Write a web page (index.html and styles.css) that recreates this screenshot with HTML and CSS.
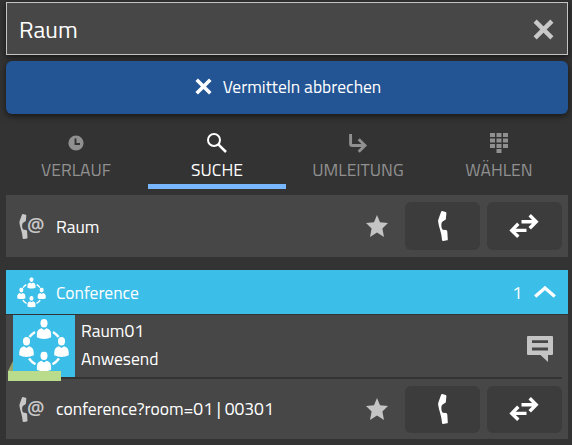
FILE: index.html
```html
<!DOCTYPE html>
<html lang="de">
<head>
    <meta charset="UTF-8">
    <meta name="viewport" content="width=device-width, initial-scale=1.0">
    <title>Suche</title>
    <link rel="stylesheet" href="styles.css">
</head>
<body>

    <!-- Shared icons -->
    <svg class="icon-defs" width="0" height="0">
        <symbol id="phone" viewBox="0 0 10 30">
            <path d="M3.2 0.6 Q3.5 0 4.2 .1 L7.6 .9 Q8.5 1.2 8.4 2 L7.8 8.4 L4.6 10.4 Q3.3 11.2 3.3 14 Q3.3 17.4 4.7 18.7 L8 19.1 Q9.2 19.4 9.3 20.4 L9.8 28.4 Q9.8 29.2 9 29.3 L5.2 29.9 Q4.2 30 4 29 Q3.7 24 2 18.5 Q.7 14.5 .1 10.5 Q0 9.3 .8 7.2 Z"/>
        </symbol>
        <symbol id="cross" viewBox="0 0 20 20">
            <path d="M2 2 L18 18 M18 2 L2 18" fill="none" stroke="currentColor" stroke-width="4.2"/>
        </symbol>
        <symbol id="star" viewBox="0 0 22 22">
            <path d="M11 0 L14 7.3 L22 8 L16.4 13.6 L18 22 L11 17.6 L4 22 L5.6 13.6 L0 8 L8 7.3 Z"/>
        </symbol>
        <symbol id="transfer" viewBox="0 0 30 24">
            <path d="M12.5 7.7 H27 M20.7 1.3 L27.2 7.7 L20.7 14.3 M17.5 16.4 H3 M9.3 9.8 L2.8 16.4 L9.3 22.8" fill="none" stroke="currentColor" stroke-width="3.4"/>
        </symbol>
        <symbol id="person" viewBox="0 0 15 20">
            <ellipse cx="7.5" cy="4.2" rx="3.5" ry="4.2"/>
            <path d="M.3 18.2 Q0 12.8 1.8 11 Q3 10 4.9 9.3 L7.5 11 L10.1 9.3 Q12 10 13.2 11 Q15 12.8 14.7 18.2 Q11.5 19.9 7.5 19.9 Q3.5 19.9 .3 18.2 Z"/>
        </symbol>
        <symbol id="conference" viewBox="0 0 50 53">
            <use href="#person" x="17.5" y="0" width="15" height="20"/>
            <use href="#person" x="0" y="18" width="15" height="20"/>
            <use href="#person" x="35" y="18" width="15" height="20"/>
            <use href="#person" x="17.5" y="32.5" width="15" height="20"/>
            <path d="M10.5 18 Q12.5 15.3 16 13 M34 13 Q37.5 15.3 39.5 18 M10 39.5 Q12.5 43 16.5 45.3 M40 39.5 Q37.5 43 33.5 45.3" fill="none" stroke="currentColor" stroke-width="2.4"/>
        </symbol>
    </svg>

    <div class="search-box">
        <span class="search-text">Raum</span>
        <svg class="icon clear-icon"><use href="#cross"/></svg>
    </div>

    <div class="cancel-btn">
        <svg class="icon cancel-icon"><use href="#cross"/></svg>
        <span>Vermitteln abbrechen</span>
    </div>

    <!-- Tabs -->
    <div class="tabs">
        <div class="tab">
            <svg class="icon tab-icon" viewBox="0 0 20 20">
                <circle cx="10" cy="10" r="7.6"/>
                <path d="M9.5 5.5 V11 H14" fill="none" stroke="#333" stroke-width="1.9"/>
            </svg>
            <span>VERLAUF</span>
        </div>
        <div class="tab active">
            <svg class="icon tab-icon" viewBox="0 0 20 20">
                <circle cx="7" cy="7" r="6" fill="none" stroke="currentColor" stroke-width="2"/>
                <path d="M11.3 11.3 L19 19" stroke="currentColor" stroke-width="2.5"/>
            </svg>
            <span>SUCHE</span>
        </div>
        <div class="tab">
            <svg class="icon tab-icon" viewBox="0 0 20 20">
                <path d="M2.6 1 V11 Q2.6 12.5 4.1 12.5 H16.5 M10.7 6.3 L17 12.5 L10.7 18.8" fill="none" stroke="currentColor" stroke-width="2.9"/>
            </svg>
            <span>UMLEITUNG</span>
        </div>
        <div class="tab">
            <svg class="icon tab-icon" viewBox="0 0 20 20">
                <path d="M1 0h5v4h-5z M7.5 0h5v4h-5z M14 0h5v4h-5z M1 5.5h5v4h-5z M7.5 5.5h5v4h-5z M14 5.5h5v4h-5z M1 11h5v4h-5z M7.5 11h5v4h-5z M14 11h5v4h-5z M7.5 16h5v4h-5z"/>
            </svg>
            <span>WÄHLEN</span>
        </div>
    </div>

    <!-- Dial the typed text -->
    <div class="row">
        <div class="phone-at"><svg class="icon"><use href="#phone"/></svg><span>@</span></div>
        <span class="row-text">Raum</span>
        <svg class="icon star"><use href="#star"/></svg>
        <div class="action"><svg class="icon call-icon"><use href="#phone"/></svg></div>
        <div class="action"><svg class="icon transfer-icon"><use href="#transfer"/></svg></div>
    </div>

    <!-- Result group -->
    <div class="group-header">
        <svg class="icon group-icon"><use href="#conference"/></svg>
        <span class="group-name">Conference</span>
        <span class="group-count">1</span>
        <svg class="icon chevron" viewBox="0 0 22 12">
            <path d="M1.2 10.6 L11 2 L20.8 10.6" fill="none" stroke="currentColor" stroke-width="3.3"/>
        </svg>
    </div>

    <div class="contact">
        <div class="avatar">
            <svg class="icon avatar-icon"><use href="#conference"/></svg>
            <svg class="presence" viewBox="0 0 53 20">
                <path d="M0 10 L5 0 V10 Z" fill="#95a66f"/>
                <path d="M0 10 H53 V20 H0 Z" fill="#b9db8c"/>
            </svg>
        </div>
        <div class="contact-info">
            <div class="contact-name">Raum01</div>
            <div class="contact-state">Anwesend</div>
        </div>
        <svg class="icon chat" viewBox="0 0 26 26">
            <path fill-rule="evenodd" d="M1 0 H25 Q26 0 26 1 V18 Q26 19 25 19 H21 V26 L13.5 19 H1 Q0 19 0 18 V1 Q0 0 1 0 Z M5 4.3 V7 H21 V4.3 Z M5 11.5 V14.5 H21 V11.5 Z"/>
        </svg>
    </div>

    <div class="row row-last">
        <div class="phone-at"><svg class="icon"><use href="#phone"/></svg><span>@</span></div>
        <span class="row-text">conference?room=01 | 00301</span>
        <svg class="icon star"><use href="#star"/></svg>
        <div class="action"><svg class="icon call-icon"><use href="#phone"/></svg></div>
        <div class="action"><svg class="icon transfer-icon"><use href="#transfer"/></svg></div>
    </div>

</body>
</html>
```

FILE: styles.css
```css
* {
    box-sizing: border-box;
}
body {
    font-family: "Titillium Web", Roboto, sans-serif;
    font-size: 17.5px;
    background-color: #333;
    color: #fff;
    margin: 0;
    padding: 2px 4px 0 6px;
    height: 445px;
    overflow: hidden;
}
.icon-defs {
    position: absolute;
}
.icon {
    display: block;
    fill: currentColor;
    flex: none;
}
.search-box {
    display: flex;
    align-items: center;
    justify-content: space-between;
    height: 53px;
    padding: 2px 13px 0 12px;
    background-color: #474747;
    border: 1px solid #c4c4c4;
    box-shadow: 0 2px 6px rgba(0, 0, 0, 0.6);
}
.search-text {
    font-size: 23.6px;
    padding-bottom: 2px;
}
.clear-icon {
    width: 21px;
    height: 21px;
    color: #c8c8c8;
}
.cancel-btn {
    display: flex;
    align-items: center;
    justify-content: center;
    gap: 11px;
    height: 53px;
    margin-top: 6px;
    padding: 0 0 2px 2px;
    background-color: #235493;
    border-radius: 6px;
    box-shadow: 0 2px 6px rgba(0, 0, 0, 0.6);
}
.cancel-icon {
    width: 17px;
    height: 17px;
}

/* tabs */
.tabs {
    display: grid;
    grid-template-columns: repeat(4, 138px);
    gap: 3px;
    padding-left: 1px;
    margin-top: 18px;
}
.tab {
    display: flex;
    flex-direction: column;
    align-items: center;
    height: 57px;
    line-height: 22px;
    color: #909090;
    border-bottom: 5px solid transparent;
}
.tab.active {
    color: #fff;
    border-bottom-color: #78b7fe;
}
.tab-icon {
    width: 20px;
    height: 20px;
    margin: 1px 0 6px;
}

/* rows */
.row {
    display: flex;
    align-items: center;
    height: 62px;
    margin-top: 6px;
    padding-right: 6px;
    background-color: #474747;
}
.row-last {
    height: 60px;
    margin-top: 0;
}
.phone-at {
    display: flex;
    align-items: center;
    width: 38px;
    margin-left: 13px;
    margin-right: -1px;
    color: #c8c8c8;
}
.phone-at .icon {
    width: 9px;
    height: 25px;
}
.phone-at span {
    font-family: "Open Sans", sans-serif;
    font-size: 19.5px;
    line-height: 20px;
    font-weight: 600;
    margin: -3px 0 0 -1px;
}
.row-text {
    flex: 1;
}
.row-last .row-text {
    padding-bottom: 2px;
}
.star {
    width: 22px;
    height: 22px;
    margin-right: 17px;
}
.action {
    display: flex;
    align-items: center;
    justify-content: center;
    width: 75px;
    height: 48px;
    background-color: #3c3c3c;
    border-radius: 6px;
}
.row-last .action {
    height: 47px;
}
.action + .action {
    margin-left: 7px;
}
.call-icon {
    width: 10px;
    height: 30px;
}
.transfer-icon {
    width: 30px;
    height: 24px;
    margin-right: 2px;
}

/* group */
.group-header {
    display: flex;
    align-items: center;
    height: 44px;
    margin-top: 13px;
    padding: 0 12px 0 11px;
    background-color: #3bbee8;
}
.group-icon {
    width: 29px;
    height: 31px;
    margin-right: 10px;
}
.group-name {
    flex: 1;
}
.chevron {
    width: 22px;
    height: 12px;
    margin-left: 12px;
}
.contact {
    display: flex;
    height: 64px;
    margin-top: 1px;
    padding: 0 6px 0 7px;
    background: linear-gradient(#333, #333) 7px 62px / 549px 2px no-repeat #474747;
}
.avatar {
    position: relative;
    width: 62px;
    height: 62px;
    padding: 4px 6px;
    background-color: #3bbee8;
}
.avatar-icon {
    width: 50px;
    height: 53px;
}
.presence {
    position: absolute;
    left: -5px;
    top: 46px;
    width: 53px;
    height: 20px;
}
.contact-info {
    flex: 1;
    padding: 2px 0 0 6px;
    line-height: 28px;
}
.chat {
    width: 26px;
    height: 26px;
    margin: 21px 9px 0 0;
}
.chat,
.star {
    color: #c4c4c4;
}
```
